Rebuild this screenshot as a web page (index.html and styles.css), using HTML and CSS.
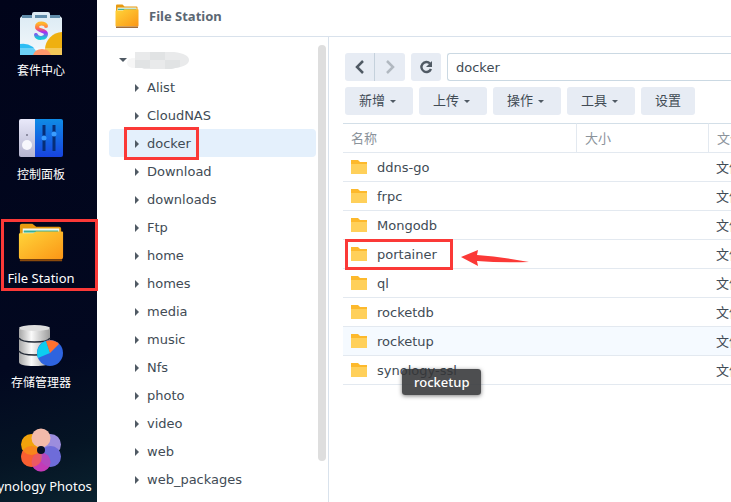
FILE: index.html
```
<!DOCTYPE html>
<html lang="zh-CN">
<head>
<meta charset="UTF-8">
<title>File Station</title>
<link rel="stylesheet" href="styles.css">
</head>
<body>
<svg width="0" height="0" class="defs">
	<defs>
		<linearGradient id="gold" x1="0" y1="0" x2="1" y2="1"><stop offset="0" stop-color="#ffd53a"/><stop offset="1" stop-color="#fb9616"/></linearGradient>
		<linearGradient id="bag" x1="0" y1="0" x2="0" y2="1"><stop offset="0" stop-color="#dcebf4"/><stop offset="1" stop-color="#f4f8fb"/></linearGradient>
		<linearGradient id="sline" x1="0" y1="0" x2="0" y2="1"><stop offset="0" stop-color="#ffb52c"/><stop offset=".35" stop-color="#ff6a50"/><stop offset=".6" stop-color="#a82bf5"/><stop offset="1" stop-color="#16c9d8"/></linearGradient>
		<linearGradient id="blue" x1="0" y1="0" x2="0" y2="1"><stop offset="0" stop-color="#0f8be6"/><stop offset="1" stop-color="#1743df"/></linearGradient>
		<linearGradient id="panel" x1="0" y1="0" x2="0" y2="1"><stop offset="0" stop-color="#e9e9fa"/><stop offset="1" stop-color="#b5b5cf"/></linearGradient>
		<linearGradient id="disk" x1="0" y1="0" x2="1" y2="0"><stop offset="0" stop-color="#a6a6a6"/><stop offset=".4" stop-color="#fafafa"/><stop offset="1" stop-color="#9b9b9b"/></linearGradient>
		<symbol id="folder" viewBox="0 0 48 42">
			<path d="M2 42V3q0-2 2-2h11l4 3h24q2 0 2 2v20H2z" fill="#e79a10"/>
			<path d="M5 6h38v8H5z" fill="#f0faf4"/><path d="M6 8h36v5H6z" fill="#3aaf94"/><path d="M5 10h37v4H5z" fill="#e9f6d9"/>
			<path d="M1 12q0-1 1-1h14l3-2h27q1 0 1 1v26q0 2-2 2H3q-2 0-2-2z" fill="url(#gold)"/>
			<path d="M2 38h44v2H2z" fill="#8a4a0c"/>
		</symbol>
		<symbol id="dir" viewBox="0 0 16 14"><path d="M0 0h7l2 2h7v12H0z" fill="#fdb92c"/><path d="M0 4h16v10H0z" fill="#ffd05a"/></symbol>
	</defs>
</svg>
<div class="page">
	<nav class="desktop">
		<a href="#" class="app">
			<svg width="48" height="48" viewBox="0 0 48 48">
				<path d="M4 9l2-4h36l2 4z" fill="#7aa2bd"/><path d="M3 8l3-3v3h36V5l3 3v36q0 1-1 1H4q-1 0-1-1z" fill="url(#bag)"/>
				<path d="M5 5h38v3H5z" fill="#5f8ba9"/><path d="M15 8V4q0-2 2-2h14q2 0 2 2v4h-3V5H18v3z" fill="#dceaf3"/>
				<path d="M45 22a18 18 0 0 0-17 17v6h17z" fill="#efb010"/><path d="M3 34q13-2 18 11H3z" fill="#2dbdf4"/><path d="M16 45q2-6 9-6t9 6z" fill="#ff6a2b"/>
				<path d="M3 38h42v7H3z" fill="#fff" opacity=".3"/>
				<path d="M29 16c0-3-9-4-9 1 0 4 9 3 9 7 0 5-9 5-10 1" fill="none" stroke="url(#sline)" stroke-width="4" stroke-linecap="round"/>
			</svg>
			<span>套件中心</span>
		</a>
		<a href="#" class="app">
			<svg width="48" height="48" viewBox="0 0 48 48">
				<path d="M4 5h14v38H4q-2 0-2-2V7q0-2 2-2z" fill="url(#panel)"/><path d="M18 5h26q2 0 2 2v34q0 2-2 2H18z" fill="url(#blue)"/>
				<circle cx="10" cy="31" r="5" fill="#f7f7fc"/><circle cx="10" cy="21" r="1" fill="#77778d"/>
				<path d="M27 11v26M37 11v26" stroke="#062e78" stroke-width="3"/><circle cx="27" cy="24" r="2.500" fill="#3b9dff"/><circle cx="37" cy="20" r="2.500" fill="#3b9dff"/>
			</svg>
			<span>控制面板</span>
		</a>
		<a href="#" class="app marked">
			<svg width="48" height="48" viewBox="-1 -5 50 50"><use href="#folder" width="48" height="42"/></svg>
			<span class="latin">File Station</span>
		</a>
		<a href="#" class="app">
			<svg width="48" height="48" viewBox="0 0 48 48">
				<path d="M2 7v33q0 4 15.500 4T33 40V7z" fill="url(#disk)"/><ellipse cx="17.500" cy="6" rx="15.500" ry="3" fill="#dedede"/>
				<path d="M2 16q2 4 15.500 4T33 16M2 29q2 4 15.500 4T33 29" fill="none" stroke="#222936" stroke-width="1.500"/>
				<circle cx="33" cy="31" r="13" fill="#2e64df"/><path d="M33 31L21 36a13 13 0 0 1 8-17z" fill="#0dcdf0"/><path d="M33 31l-4-12a13 13 0 0 1 13 3z" fill="#ff7130"/>
			</svg>
			<span>存储管理器</span>
		</a>
		<a href="#" class="app">
			<svg width="48" height="48" viewBox="0 0 48 48">
				<g opacity=".95">
					<circle cx="33.500" cy="18.500" r="10.500" fill="#a594e8"/><circle cx="33.500" cy="30.500" r="10.500" fill="#7270e0"/><circle cx="24" cy="36" r="9.500" fill="#c12fc5"/>
					<circle cx="14.500" cy="30.500" r="10.500" fill="#ff6132"/><circle cx="14.500" cy="18.500" r="10.500" fill="#ffab0a"/><circle cx="24" cy="12" r="9.500" fill="#ffc4b2"/>
				</g>
				<circle cx="14.500" cy="30.500" r="10.500" fill="#ff6132" opacity=".45"/><circle cx="33.500" cy="30.500" r="10.500" fill="#7270e0" opacity=".35"/><circle cx="24" cy="36" r="9.500" fill="#d850b0" opacity=".4"/>
				<circle cx="24" cy="24" r="4" fill="#071126"/>
			</svg>
			<span class="latin">Synology Photos</span>
		</a>
	</nav>
	<div class="window">
		<header class="titlebar">
			<svg width="24" height="25" viewBox="0 0 48 42" preserveAspectRatio="none"><use href="#folder" width="48" height="42"/></svg>
			<h1>File Station</h1>
		</header>
		<div class="content">
			<aside class="tree">
				<ul>
					<li class="root"><i class="down"></i><svg width="62" height="20" viewBox="0 0 62 20"><path d="M0 13q0-5 8-5v10q-8 0-8-5z" fill="#f6f6f6"/><path d="M8 2h39q15 2 15 8t-14 8l-4 1H17l-2-1H8z" fill="#e9eaeb"/><path d="M23 2h15v8H23zM8 10h15v8H8zM38 10h15v7l-9 2h-6z" fill="#e1e3e4"/></svg></li>
					<li><i class="arrow"></i>Alist</li>
					<li><i class="arrow"></i>CloudNAS</li>
					<li class="selected"><i class="arrow"></i>docker</li>
					<li><i class="arrow"></i>Download</li>
					<li><i class="arrow"></i>downloads</li>
					<li><i class="arrow"></i>Ftp</li>
					<li><i class="arrow"></i>home</li>
					<li><i class="arrow"></i>homes</li>
					<li><i class="arrow"></i>media</li>
					<li><i class="arrow"></i>music</li>
					<li><i class="arrow"></i>Nfs</li>
					<li><i class="arrow"></i>photo</li>
					<li><i class="arrow"></i>video</li>
					<li><i class="arrow"></i>web</li>
					<li><i class="arrow"></i>web_packages</li>
					<li><i class="arrow"></i>zhihilihi</li>
				</ul>
				<div class="scrollbar"></div>
			</aside>
			<main class="files">
				<div class="pathbar">
					<div class="history">
						<button type="button" aria-label="后退"><svg width="12" height="14" viewBox="0 0 12 14"><path d="M9 1L3 7l6 6" fill="none" stroke="#505a64" stroke-width="2.500"/></svg></button>
						<button type="button" aria-label="前进" disabled><svg width="12" height="14" viewBox="0 0 12 14"><path d="M3 1l6 6-6 6" fill="none" stroke="#b1b8c0" stroke-width="2.500"/></svg></button>
					</div>
					<button type="button" aria-label="刷新"><svg width="14" height="14" viewBox="0 0 14 14"><path d="M11 3.500A5 5 0 1 0 12 9" fill="none" stroke="#505a64" stroke-width="2.400"/><path d="M13 1v6H7z" fill="#505a64"/></svg></button>
					<input type="text" class="path" aria-label="路径" value="docker">
				</div>
				<div class="toolbar">
					<button type="button">新增<i class="caret"></i></button>
					<button type="button">上传<i class="caret"></i></button>
					<button type="button">操作<i class="caret"></i></button>
					<button type="button">工具<i class="caret"></i></button>
					<button type="button">设置</button>
				</div>
				<table>
					<thead><tr><th class="name">名称</th><th class="size">大小</th><th>文件类型</th></tr></thead>
					<tbody>
						<tr><td><svg class="dir"><use href="#dir"/></svg>ddns-go</td><td></td><td>文件夹</td></tr>
						<tr><td><svg class="dir"><use href="#dir"/></svg>frpc</td><td></td><td>文件夹</td></tr>
						<tr><td><svg class="dir"><use href="#dir"/></svg>Mongodb</td><td></td><td>文件夹</td></tr>
						<tr class="target"><td><svg class="dir"><use href="#dir"/></svg>portainer<svg class="pointer" viewBox="0 0 68 16"><path d="M0 7L17 0l-1 5q26 2 52 7-27 1-52-1l1 5z" fill="#fb3937"/></svg></td><td></td><td>文件夹</td></tr>
						<tr><td><svg class="dir"><use href="#dir"/></svg>ql</td><td></td><td>文件夹</td></tr>
						<tr><td><svg class="dir"><use href="#dir"/></svg>rocketdb</td><td></td><td>文件夹</td></tr>
						<tr class="hover"><td><svg class="dir"><use href="#dir"/></svg>rocketup<span class="tip">rocketup</span></td><td></td><td>文件夹</td></tr>
						<tr><td><svg class="dir"><use href="#dir"/></svg>synology-ssl</td><td></td><td>文件夹</td></tr>
					</tbody>
				</table>
			</main>
		</div>
	</div>
</div>
</body>
</html>
```
FILE: styles.css
```
*,*::after{
	box-sizing:border-box;
}
body{
	margin:0;
	font:13px/18px "DejaVu Sans","Noto Sans CJK SC",sans-serif;
	color:#414b55;
}
.defs{
	position:absolute;
}
.page{
	display:flex;
	height:100vh;
	overflow:hidden;
}
.desktop{
	flex:none;
	width:97px;
	background:linear-gradient(165deg,#01041a 0,#020820 70%,#051424 88%,#0a222f 100%);
}
.app{
	position:relative;
	display:flex;
	flex-direction:column;
	align-items:center;
	width:82px;
	height:104px;
	padding-top:10px;
	color:#fff;
	font:12px/18px "Noto Sans","Noto Sans CJK SC",sans-serif;
	text-decoration:none;
	white-space:nowrap;
}
.app svg{
	flex:none;
	margin-bottom:4px;
}
.app .latin{
	font-size:13px;
	line-height:16px;
}
.marked::after{
	content:"";
	position:absolute;
	left:1px;
	top:11px;
	width:97px;
	height:72px;
	border:3px solid #fb3937;
	z-index:1;
}
.window{
	flex:1;
	min-width:0;
	display:flex;
	flex-direction:column;
	background:#fff;
}
.titlebar{
	display:flex;
	align-items:center;
	gap:10px;
	height:37px;
	flex:none;
	padding:0 18px 4px;
	border-bottom:1px solid #d9e2ec;
}
.titlebar h1{
	margin:0;
	font:bold 13px/18px "Noto Sans",sans-serif;
	color:#5b6773;
}
.content{
	flex:1;
	min-height:0;
	display:flex;
}
.tree{
	flex:none;
	display:flex;
	gap:2px;
	width:232px;
	padding:8px 2px 0 12px;
	border-right:1px solid #d9e2ec;
}
.tree ul{
	flex:1;
	margin:0;
	padding:0;
	list-style:none;
}
.tree li{
	position:relative;
	display:flex;
	align-items:center;
	gap:8px;
	height:28px;
	padding-top:1px;
	padding-left:26px;
	border-radius:4px;
}
.tree .root{
	gap:0;
	padding-left:10px;
}
.tree .selected{
	background:#e4f0fc;
}
.tree .selected::after{
	content:"";
	position:absolute;
	left:15px;
	top:-2px;
	width:75px;
	height:33px;
	border:3px solid #fb3937;
}
.arrow{
	border:4px solid transparent;
	border-left-color:#505a64;
	border-right:0;
}
.down{
	border:4px solid transparent;
	border-top-color:#505a64;
	border-bottom:0;
}
.scrollbar{
	width:8px;
	height:416px;
	border-radius:4px;
	background:#dedede;
}
.files{
	flex:1;
	min-width:0;
	padding-top:16px;
	padding-left:14px;
}
button{
	display:flex;
	align-items:center;
	justify-content:center;
	height:28px;
	padding:0;
	border:0;
	border-radius:3px;
	background:#e7ecf4;
	color:#414b55;
	font:inherit;
}
.pathbar,.toolbar{
	display:flex;
	gap:6px;
	padding-left:2px;
}
.pathbar button{
	flex:none;
	width:30px;
}
.history{
	display:flex;
	flex:none;
}
.history button:first-child{
	border-right:1px solid #c5d1dc;
	border-radius:3px 0 0 3px;
}
.history button:last-child{
	border-radius:0 3px 3px 0;
}
.path{
	flex:1;
	min-width:0;
	height:28px;
	padding:0 8px;
	border:1px solid #cbd9e3;
	border-right:0;
	border-radius:3px 0 0 3px;
	color:#414b55;
	font:inherit;
}
.toolbar{
	margin-top:6px;
}
.toolbar button{
	padding:0 14px;
	gap:5px;
}
.caret{
	margin-right:3px;
	border:3px solid transparent;
	border-top-color:#505a64;
	border-bottom:0;
}
table{
	width:100%;
	margin-top:8px;
	table-layout:fixed;
	border-collapse:separate;
	border-spacing:0;
}
th,td{
	height:29px;
	padding:2px 8px 0;
	border-bottom:1px solid #e3e9f0;
	text-align:left;
	font-weight:normal;
	white-space:nowrap;
}
th{
	height:30px;
	border-top:1px solid #d3dfe8;
	color:#8b939b;
}
th + th{
	border-left:1px solid #e3e9f0;
}
.name{
	width:233px;
}
.size{
	width:132px;
}
td:first-child{
	position:relative;
}
.dir{
	width:16px;
	height:14px;
	margin-right:10px;
	vertical-align:-2px;
}
.hover td{
	background:#f5faff;
}
.target td:first-child::after{
	content:"";
	position:absolute;
	left:2px;
	top:-1px;
	width:108px;
	height:31px;
	border:3px solid #fb3937;
}
.pointer{
	position:absolute;
	left:118px;
	top:10px;
	width:68px;
	height:16px;
}
.tip{
	position:absolute;
	left:59px;
	top:42px;
	z-index:1;
	padding:4px 12px;
	border-radius:3px;
	background:rgba(52,54,56,.88);
	box-shadow:0 1px 4px rgba(0,0,0,.5);
	color:#fff;
	font:500 13px/18px "Noto Sans",sans-serif;
}
```
